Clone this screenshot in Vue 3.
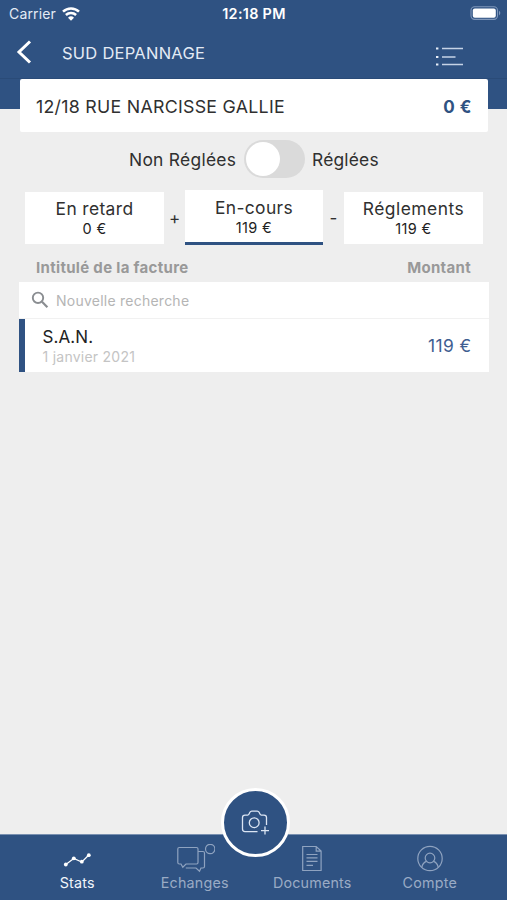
<script setup>
const tabs = [
  { id: 'stats', label: 'Stats', active: true },
  { id: 'echanges', label: 'Echanges', active: false },
  { id: 'documents', label: 'Documents', active: false },
  { id: 'compte', label: 'Compte', active: false },
]
</script>

<template>
  <div class="screen">
    <div class="top">
      <div class="status">
        <div class="carrier">
          <span>Carrier</span>
          <svg width="18" height="14" viewBox="0 0 18 14" fill="#fff">
            <path d="M9 13.8 6 10.700a4.300 4.300 0 0 1 6 0Z" />
            <path d="M1 4.700a11.600 11.600 0 0 1 16 0M3.900 8a7.400 7.400 0 0 1 10.200 0" fill="none" stroke="#fff" stroke-width="2.500" />
          </svg>
        </div>
        <span class="time">12:18 PM</span>
        <svg class="battery" width="31" height="15" viewBox="0 0 31 15">
          <rect x="1" y="0.800" width="26.500" height="12.600" rx="3.600" fill="none" stroke="#7f97ba" stroke-width="1.100" />
          <rect x="2.800" y="2.400" width="23" height="9.400" rx="2" fill="#fff" />
          <path d="M29 4.800v4.600q1.300-.8 1.300-2.300T29 4.800Z" fill="#7f97ba" />
        </svg>
      </div>
      <div class="nav">
        <svg class="back" width="16" height="24" viewBox="0 0 16 24" fill="none" stroke="#fff" stroke-width="3">
          <path d="M14 1.500 3 12l11 10.500" />
        </svg>
        <span class="title">SUD DEPANNAGE</span>
        <svg class="list" width="30" height="22" viewBox="0 0 30 22" stroke="#c6d3e6" stroke-width="1.300">
          <path d="M8 2.500h21M8 11h13.500M8 18.500h21" />
          <path d="M2 2.500h2.400M2 11h2.400M2 18.500h2.400" stroke="#e8eff9" stroke-width="2.200" />
        </svg>
      </div>
    </div>

    <div class="card">
      <span class="address">12/18 RUE NARCISSE GALLIE</span>
      <span class="balance">0 €</span>
    </div>

    <div class="switch-row">
      <span class="off-label">Non Réglées</span>
      <div class="switch"><div class="knob"></div></div>
      <span class="on-label">Réglées</span>
    </div>

    <div class="totals">
      <div class="box"><span class="name late">En retard</span><span class="amount">0 €</span></div>
      <span class="sign">+</span>
      <div class="box selected"><span class="name current">En-cours</span><span class="amount">119 €</span></div>
      <span class="sign">-</span>
      <div class="box"><span class="name paid">Réglements</span><span class="amount">119 €</span></div>
    </div>

    <div class="columns"><span class="col-name">Intitulé de la facture</span><span class="col-sum">Montant</span></div>

    <div class="table">
      <div class="search">
        <svg width="18" height="18" viewBox="0 0 18 18" fill="none" stroke="#8a8d91">
          <circle cx="7" cy="6.800" r="5.200" stroke-width="1.900" />
          <path d="m11 10.800 5.400 5.400" stroke-width="2.200" />
        </svg>
        <span class="placeholder">Nouvelle recherche</span>
      </div>
      <div class="invoice">
        <div class="info"><span class="supplier">S.A.N.</span><span class="date">1 janvier 2021</span></div>
        <span class="sum">119 €</span>
      </div>
    </div>

    <div class="tabbar">
      <div v-for="t in tabs" :key="t.id" class="tab" :class="[t.id, { active: t.active }]">
        <svg v-if="t.id === 'stats'" width="30" height="30" viewBox="0 0 30 30" fill="none" stroke="#fff" stroke-width="1.200">
          <path d="m3.800 20.500 8-6 8 3.500 7-7" />
          <g fill="#fff" stroke="none"><circle cx="3.800" cy="20.500" r="1.900" /><circle cx="11.800" cy="14.300" r="1.900" /><circle cx="19.800" cy="17.700" r="1.900" /><circle cx="26.800" cy="11.200" r="1.900" /></g>
        </svg>
        <svg v-else-if="t.id === 'echanges'" width="40" height="30" viewBox="0 0 40 30" fill="none" stroke="currentColor" stroke-width="1.200">
          <path d="M4.300 3.500h17.200q1.500 0 1.500 1.500v13.500q0 1.500-1.500 1.500H11l-3.200 3.200L6 20H4.300q-1.500 0-1.500-1.500V5q0-1.500 1.500-1.500Z" />
          <path d="M23 7.500h5q1.500 0 1.500 1.500v13.500q0 1.500-1.500 1.500h-2l-1.500 3.200L21 24H10.800" />
          <circle cx="35.200" cy="5" r="4.700" />
        </svg>
        <svg v-else-if="t.id === 'documents'" width="30" height="30" viewBox="0 0 30 30" fill="none" stroke="currentColor" stroke-width="1.200">
          <path d="M5.700 2.500h13.500l4.900 4.600v19.400H5.700ZM19.200 2.500v4.600h4.900M9.500 10.500h11M9.500 13.900h11M9.500 17.300h11M9.500 21.300h6.500" />
        </svg>
        <svg v-else width="30" height="30" viewBox="0 0 30 30" fill="none" stroke="currentColor" stroke-width="1.200">
          <circle cx="15" cy="14.500" r="12.200" /><circle cx="15" cy="14" r="4.800" />
          <path d="M6.800 23.400c.6-3.200 2.300-5.300 4.800-6M23.200 23.400c-.6-3.200-2.300-5.300-4.800-6" />
        </svg>
        <span class="label">{{ t.label }}</span>
      </div>
    </div>

    <div class="fab">
      <svg width="32" height="30" viewBox="0 0 32 30" fill="none" stroke="#dbe5f3" stroke-width="1.300">
        <path d="M18.500 24.600H6q-2.500 0-2.500-2.500V10.600q0-2.500 2.500-2.500h2.700q.8 0 1.200-.8l1-2q.6-1.200 1.900-1.200h5.400q1.300 0 1.900 1.200l1 2q.4.8 1.200.8h2.700q2.500 0 2.500 2.500v7.500" />
        <circle cx="15.200" cy="15.700" r="4.900" />
        <path d="M26 19.600v8M22 23.600h8" />
      </svg>
    </div>
  </div>
</template>

<style>
body { background: #eee; }
</style>

<style scoped>
.screen { position: relative; width: 507px; height: 900px; overflow: hidden; display: flex; flex-direction: column; background: #eee; color: #303030; font-family: Inter, "Liberation Sans", sans-serif; line-height: 20px; white-space: nowrap; }
svg { display: block; flex: none; }
.top { height: 109px; flex: none; background: #2f5282; color: #fff; }
.status { height: 27px; display: grid; grid-template-columns: 1fr auto 1fr; align-items: center; padding: 0 6px 0 9px; box-sizing: border-box; }
.carrier { display: flex; align-items: center; gap: 6px; font-size: 14px; color: #e4ebf5; letter-spacing: 0.15px; }
.time { margin-left: -2px; font-size: 14.4px; font-weight: 600; letter-spacing: 0.3px; }
.battery { justify-self: end; }
.nav { height: 52px; display: flex; align-items: center; padding: 0 43px 0 16px; box-sizing: border-box; border-bottom: 1px solid #2a4b78; }
.back { margin-top: -1px; }
.title { margin-left: 30px; font-size: 16.5px; letter-spacing: 0.25px; color: #e4ebf5; }
.list { margin: 8px 0 0 auto; }
.card { height: 53px; flex: none; margin: -30px 19px 0 20px; padding: 2px 16px 0 16px; box-sizing: border-box; border-radius: 2px; background: #fff; display: flex; align-items: center; justify-content: space-between; }
.address { font-size: 17.8px; letter-spacing: 0.27px; }
.balance { font-size: 17px; font-weight: 700; letter-spacing: 0.5px; color: #2f5282; }
.switch-row { margin-top: 8px; height: 38px; flex: none; display: flex; align-items: center; padding-left: 129px; font-size: 17.4px; letter-spacing: 0.28px; }
.off-label { width: 107px; padding-top: 1px; }
.on-label { padding-top: 1px; letter-spacing: 0.2px; }
.switch { width: 61px; height: 38px; border-radius: 19px; background: #dadada; margin: 0 7px 0 8px; display: flex; align-items: center; padding-left: 1.5px; box-sizing: border-box; }
.knob { width: 34px; height: 34px; border-radius: 50%; background: #fff; }
.totals { margin-top: 12px; height: 55px; flex: none; padding: 0 24px 0 25px; display: grid; grid-template-columns: 139px 21px 138px 21px 139px; align-items: center; }
.box { height: 52px; background: #fff; display: flex; flex-direction: column; align-items: center; padding-top: 7px; box-sizing: border-box; }
.box.selected { height: 55px; padding-top: 8px; border-bottom: 3px solid #2f5282; }
.name { font-size: 17.4px; line-height: 20px; letter-spacing: 0.38px; }
.name.paid { letter-spacing: 0.52px; }
.amount { font-size: 14.5px; line-height: 19px; letter-spacing: 0.35px; color: #222; }
.sign { text-align: center; font-size: 17px; }
.columns { height: 37px; flex: none; box-sizing: border-box; padding: 7px 36px 0; display: flex; justify-content: space-between; align-items: flex-start; line-height: 31px; font-size: 15px; font-weight: 700; letter-spacing: 0.32px; color: #999; }
.table { margin: 0 18px 0 19px; flex: none; background: #fff; }
.search { height: 37px; box-sizing: border-box; border-bottom: 1px solid #f1f1f1; display: flex; align-items: center; padding-left: 12px; gap: 7px; }
.placeholder { padding-top: 1px; font-size: 14px; letter-spacing: 0.24px; color: #b5b5b5; }
.invoice { height: 53px; box-sizing: border-box; border-left: 6px solid #2f5282; display: flex; align-items: center; justify-content: space-between; padding: 0 17.5px 0 17.5px; }
.info { display: flex; flex-direction: column; padding-top: 3px; }
.supplier { font-size: 17px; letter-spacing: 0.1px; color: #222; }
.date { font-size: 14px; letter-spacing: 0.25px; color: #c4c4c4; }
.sum { font-size: 17.4px; letter-spacing: 0.4px; color: #3f5e91; }
.tabbar { margin-top: auto; height: 66px; flex: none; box-sizing: border-box; border-top: 1px solid #7990b0; background: #2f5282; padding: 0 18.500px; display: grid; grid-template-columns: repeat(4, 1fr); }
.tab { display: flex; flex-direction: column; align-items: center; padding-top: 9px; color: #9aabc5; font-size: 14.3px; letter-spacing: 0.2px; }
.tab svg { color: #8fa3c0; }
.label { line-height: 18px; }
.tab.active { color: #f2f6fb; }
.fab { position: absolute; left: 220.500px; top: 787.5px; width: 69.5px; height: 69.5px; box-sizing: border-box; border: 3px solid #fff; border-radius: 50%; background: #2f5282; display: flex; align-items: center; justify-content: center; }
.fab svg { margin: -1px 0 0 0; }
</style>
